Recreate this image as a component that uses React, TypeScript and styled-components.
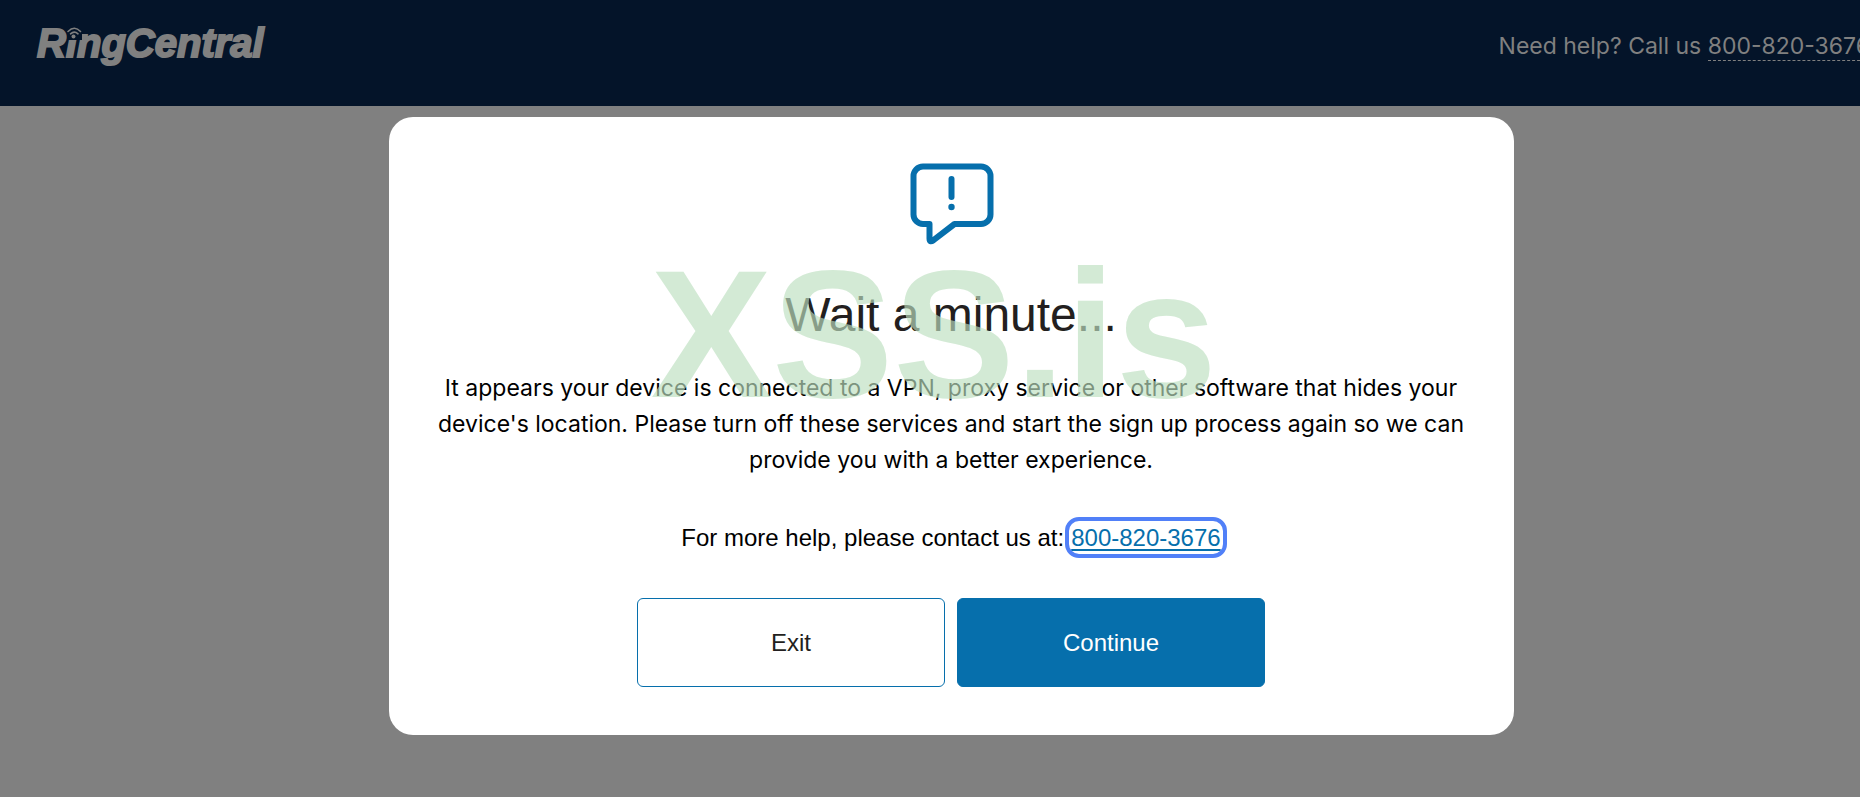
import React from "react";
import styled, { createGlobalStyle } from "styled-components";

const GlobalStyle = createGlobalStyle`
  *, *::before, *::after { box-sizing: border-box; }
  html { height: 100%; overflow: hidden; background: #808080; }
  body {
    margin: 0;
    min-height: 100%;
    overflow: hidden;
    font-family: "Liberation Sans", Arial, sans-serif;
    background: #808080;
    color: #000;
  }
`;

const brandFont = `Inter, "Noto Sans", sans-serif`;

/* The page runs 42px past the right edge of the window. */
const Page = styled.div`
  width: calc(100% + 42px);
`;

const Header = styled.header`
  display: flex;
  justify-content: space-between;
  align-items: flex-start;
  height: 106px;
  padding: 18px 32px 0 37px;
  background: #041429;
  color: #808080;
`;

const Logo = styled.a`
  position: relative;
  color: inherit;
  font-size: 40px;
  line-height: 50px;
  font-weight: 700;
  font-style: italic;
  text-decoration: none;
  -webkit-text-stroke: 2px #808080;
`;

const Signal = styled.svg`
  position: absolute;
  left: 29px;
  top: 6px;
`;

const Help = styled.p`
  margin: 13px 0 0;
  font-family: ${brandFont};
  font-size: 23px;
  line-height: 30px;
  white-space: nowrap;
`;

const HelpLink = styled.a`
  display: inline-block;
  height: 30px;
  color: inherit;
  text-decoration: none;
  border-bottom: 1px dashed #808080;
`;

const Main = styled.main`
  display: flex;
  justify-content: center;
  padding: 11px 24px 62px;
`;

const Dialog = styled.section`
  position: relative;
  display: flex;
  flex-direction: column;
  align-items: center;
  width: 100%;
  max-width: 1125px;
  padding: 46px 40px 48px;
  border-radius: 24px;
  background: #fff;
  text-align: center;
`;

const Title = styled.h1`
  margin: 40px 0 27px;
  font-size: 48px;
  line-height: 56px;
  font-weight: 400;
  color: #231f20;
`;

const Message = styled.p`
  margin: 0;
  font-family: ${brandFont};
  font-size: 23px;
  line-height: 36px;
`;

const Contact = styled.p`
  display: flex;
  gap: 7px;
  margin: 44px 0;
  font-size: 24px;
  line-height: 32px;
`;

const PhoneLink = styled.a`
  height: 29px;
  margin-top: 1px;
  line-height: 30px;
  color: #066fac;
  text-decoration: underline;
  text-decoration-thickness: 2px;
  text-underline-offset: 3px;
  border-radius: 8px;
  outline: 4px solid #5180f8;
  outline-offset: 2px;
`;

const Actions = styled.div`
  display: flex;
  gap: 12px;
  width: 100%;
  max-width: 628px;
`;

const Button = styled.button<{ $primary?: boolean }>`
  flex: 1;
  height: 89px;
  border: 1px solid #066fac;
  border-radius: 6px;
  background: ${(p) => (p.$primary ? "#066fac" : "#fff")};
  color: ${(p) => (p.$primary ? "#fff" : "#231f20")};
  font: 400 24px/32px "Liberation Sans", Arial, sans-serif;
  cursor: pointer;
`;

const Watermark = styled.span`
  position: absolute;
  top: 117px;
  left: 262px;
  font-size: 182px;
  line-height: 200px;
  font-weight: 700;
  color: rgba(188, 223, 191, 0.66);
  pointer-events: none;
`;

function AlertBubble() {
  return (
    <svg width="86" height="84" viewBox="-2 0 86 84" fill="none" stroke="#066fac" strokeWidth="6" strokeLinecap="round" strokeLinejoin="round" aria-hidden="true">
      <path d="M13 3.500H71A9.500 9.500 0 0 1 80.500 13V51.500A9.500 9.500 0 0 1 71 61H44.500L23.500 77.200Q19.500 80 19.500 75.500V61H13A9.500 9.500 0 0 1 3.500 51.500V13A9.500 9.500 0 0 1 13 3.500Z" />
      <path d="M41.500 16V34" />
      <circle cx="41.500" cy="44" r="3.200" fill="#066fac" stroke="none" />
    </svg>
  );
}

export default function App() {
  return (
    <Page>
      <GlobalStyle />
      <Header>
        <Logo href="#home">
          RingCentral
          <Signal width="16" height="16" viewBox="0 0 16 16" fill="none" stroke="#808080" strokeLinecap="round" aria-hidden="true">
            <path d="M1 0H16V16H1Z" fill="#041429" stroke="none" />
            <path d="M2 7.500Q8.500 1 14.500 7.500" strokeWidth="1.600" />
            <path d="M4.500 9.800Q8.300 6.300 12 9.800" strokeWidth="1.600" />
            <circle cx="7.500" cy="12.600" r="2" fill="#808080" stroke="none" />
          </Signal>
        </Logo>
        <Help>
          Need help? Call us <HelpLink href="tel:8008203676">800-820-3676</HelpLink>
        </Help>
      </Header>
      <Main>
        <Dialog role="dialog" aria-labelledby="dialog-title">
          <AlertBubble />
          <Title id="dialog-title">Wait a minute...</Title>
          <Message>
            It appears your device is connected to a VPN, proxy service or other software that hides your device's
            location. Please turn off these services and start the sign up process again so we can provide you with a
            better experience.
          </Message>
          <Contact>
            For more help, please contact us at:
            <PhoneLink href="tel:8008203676">800-820-3676</PhoneLink>
          </Contact>
          <Actions>
            <Button type="button">Exit</Button>
            <Button type="button" $primary>
              Continue
            </Button>
          </Actions>
          <Watermark>XSS.is</Watermark>
        </Dialog>
      </Main>
    </Page>
  );
}
